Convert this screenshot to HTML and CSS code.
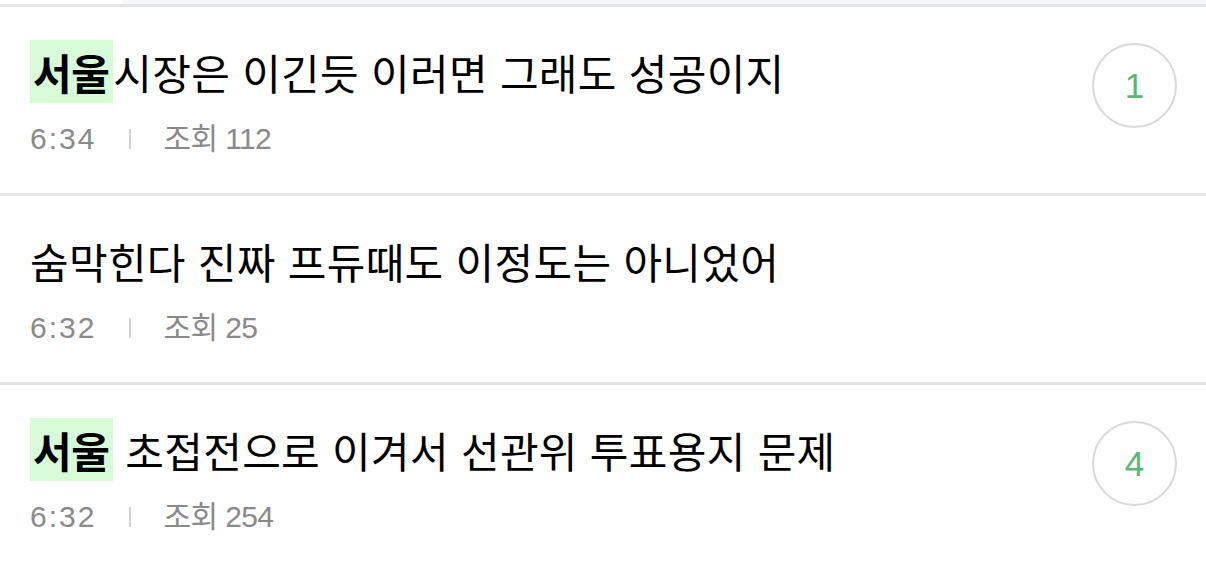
FILE: index.html
```html
<!DOCTYPE html>
<html lang="ko">
<head>
<meta charset="utf-8">
<link rel="stylesheet" href="styles.css">
</head>
<body>
<div class="topstrip"><div class="topstrip-fill"></div></div>
<ul class="list">
  <li class="item">
    <div class="main">
      <div class="title"><span class="tag">서울</span>시장은 이긴듯 이러면 그래도 성공이지</div>
      <div class="meta"><span class="time">6:34</span><span class="sep"></span><span class="views">조회 112</span></div>
    </div>
    <div class="count">1</div>
  </li>
  <li class="item">
    <div class="main">
      <div class="title">숨막힌다 진짜 프듀때도 이정도는 아니었어</div>
      <div class="meta"><span class="time">6:32</span><span class="sep"></span><span class="views">조회 25</span></div>
    </div>
  </li>
  <li class="item">
    <div class="main">
      <div class="title"><span class="tag">서울</span> 초접전으로 이겨서 선관위 투표용지 문제</div>
      <div class="meta"><span class="time">6:32</span><span class="sep"></span><span class="views">조회 254</span></div>
    </div>
    <div class="count">4</div>
  </li>
</ul>
</body>
</html>
```
FILE: styles.css
```css
html, body {
  margin: 0;
  padding: 0;
  background: #ffffff;
}
body {
  font-family: "Noto Sans CJK KR", "Liberation Sans", sans-serif;
  color: #000;
  overflow: hidden;
}
.topstrip {
  height: 4px;
  padding-left: 123px;
  border-bottom: 3px solid #e4e4e4;
}
.topstrip-fill {
  height: 4px;
  background: #f5f6f8;
}
.list {
  list-style: none;
  margin: 0;
  padding: 0;
}
.item {
  display: flex;
  align-items: flex-start;
  padding: 33px 29px 34px 30px;
  border-bottom: 3px solid #e4e4e4;
}
.main {
  flex: 1;
  min-width: 0;
}
.title {
  height: 63px;
  line-height: 63px;
  font-size: 42px;
  letter-spacing: 0.3px;
  white-space: nowrap;
}
.tag {
  display: inline-block;
  height: 63px;
  line-height: 63px;
  padding: 0 4px 0 3px;
  background: #d8fbd8;
  font-weight: 700;
  letter-spacing: -0.5px;
  vertical-align: top;
}
.meta {
  display: flex;
  align-items: baseline;
  margin-top: 16px;
  height: 40px;
  line-height: 40px;
  font-family: "Liberation Sans", "Noto Sans CJK KR", sans-serif;
  font-size: 30px;
  color: #8a8a8a;
}
.time {
  letter-spacing: 2px;
}
.sep {
  align-self: center;
  width: 2px;
  height: 20px;
  background: #d2d2d2;
  margin: 0 32px 0 33px;
}
.views {
  letter-spacing: -0.6px;
}
.count {
  margin-top: 3px;
  width: 81px;
  height: 81px;
  border: 2px solid #d9d9d9;
  border-radius: 50%;
  display: flex;
  align-items: center;
  justify-content: center;
  font-family: "Liberation Sans", sans-serif;
  font-size: 35px;
  color: #5bb873;
}
```
